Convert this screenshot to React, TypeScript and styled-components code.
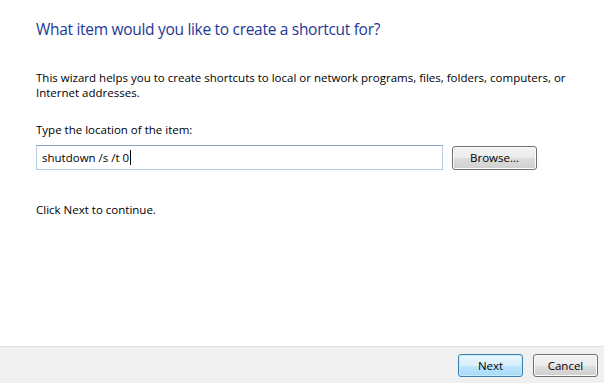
import React from 'react';
import styled, { createGlobalStyle } from 'styled-components';

const GlobalStyle = createGlobalStyle`
  html, body {
    margin: 0;
    padding: 0;
    background: #ffffff;
  }
  body {
    font-family: 'Open Sans', 'Noto Sans', 'Liberation Sans', sans-serif;
  }
`;

const Wizard = styled.div`
  width: 604px;
  height: 383px;
  display: flex;
  flex-direction: column;
  background: #ffffff;
  overflow: hidden;
`;

const Content = styled.main`
  flex: 1;
  padding: 18px 0 0 36px;
`;

const Title = styled.h1`
  margin: 0;
  font-size: 15.5px;
  font-weight: 400;
  line-height: 22px;
  color: #1e3996;
  letter-spacing: -0.3px;
`;

const Text = styled.p<{ $top: number }>`
  margin: ${(p) => p.$top}px 0 0 0;
  font-size: 11.5px;
  line-height: 15px;
  color: #000000;
  max-width: 540px;
`;

const FieldRow = styled.div`
  display: flex;
  align-items: center;
  gap: 9px;
  margin-top: 8px;
`;

const Field = styled.div`
  box-sizing: border-box;
  width: 407px;
  height: 25px;
  padding: 0 5px;
  display: flex;
  align-items: center;
  font-size: 11.5px;
  color: #000;
  border: 1px solid #b5cbe0;
  border-top-color: #8aa6c4;
  background: #fff;
  cursor: text;
`;

const Caret = styled.span`
  width: 1px;
  height: 15px;
  margin-left: 1px;
  background: #000;
`;

const Button = styled.button<{ $primary?: boolean }>`
  box-sizing: border-box;
  width: 65px;
  height: 23px;
  padding: 0;
  font-family: inherit;
  font-size: 11.5px;
  color: #000;
  border-radius: 3px;
  border: 1px solid ${(p) => (p.$primary ? '#3c7fb1' : '#707070')};
  background: ${(p) =>
    p.$primary
      ? 'linear-gradient(#eaf6fd 0%, #d9f0fc 50%, #bee6fd 51%, #a7d9f5 100%)'
      : 'linear-gradient(#f2f2f2 0%, #ebebeb 50%, #dddddd 51%, #cfcfcf 100%)'};
  box-shadow: inset 0 0 0 1px ${(p) => (p.$primary ? '#c5ecfc' : '#fcfcfc')};
  cursor: default;
`;

const BrowseButton = styled(Button)`
  width: 85px;
  height: 24px;
`;

const Footer = styled.footer`
  height: 37px;
  box-sizing: border-box;
  border-top: 1px solid #dfdfdf;
  background: #f0f0f0;
  display: flex;
  justify-content: flex-end;
  align-items: center;
  gap: 10px;
  padding: 0 6px 0 0;
`;

export default function App() {
  const location = 'shutdown /s /t 0';

  return (
    <>
      <GlobalStyle />
      <Wizard>
        <Content>
          <Title>What item would you like to create a shortcut for?</Title>
          <Text $top={30}>
            This wizard helps you to create shortcuts to local or network programs, files, folders,
            computers, or Internet addresses.
          </Text>
          <Text $top={22}>Type the location of the item:</Text>
          <FieldRow>
            <Field role="textbox" aria-label="Location of the item">
              <span>{location}</span>
              <Caret />
            </Field>
            <BrowseButton>Browse...</BrowseButton>
          </FieldRow>
          <Text $top={32}>Click Next to continue.</Text>
        </Content>
        <Footer>
          <Button $primary>Next</Button>
          <Button>Cancel</Button>
        </Footer>
      </Wizard>
    </>
  );
}
